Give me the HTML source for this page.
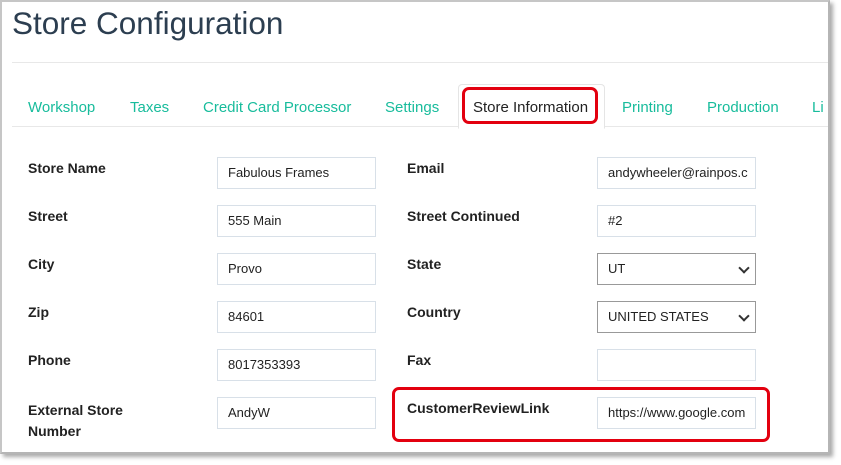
<!DOCTYPE html>
<html><head><style>
body{margin:0;width:841px;height:465px;background:#fff;position:relative;overflow:hidden;font-family:"Liberation Sans",sans-serif}
.page{position:absolute;left:0;top:0;width:826px;height:450px;background:#fff;border-top:2px solid #c6c6c6;border-left:2px solid #c6c6c6;box-shadow:3px 3px 4px #aaa;border-right:2px solid #b5b5b5;border-bottom:2px solid #b5b5b5}
h1{position:absolute;left:10px;top:3px;margin:0;font-size:31.5px;font-weight:normal;color:#2c3e50}
.hr{position:absolute;left:10px;right:0;height:1px;background:#e8e8e8}
.tab{position:absolute;top:97px;font-size:15px;color:#18bc9c}
.active{position:absolute;left:456px;top:82px;width:145px;height:43px;border:1px solid #e5e5e5;border-bottom:1px solid #fff;background:#fff;border-radius:4px 4px 0 0}
.red{position:absolute;border:3px solid #e3000f;border-radius:7px}
.lbl{position:absolute;font-size:14px;font-weight:bold;color:#222}
.in{position:absolute;border:1px solid #d8e0e8;font-size:13px;color:#222;line-height:30px;padding-left:10px;box-sizing:border-box;width:159px;height:32px;white-space:nowrap;overflow:hidden}
.sel::after{content:"";position:absolute;right:7px;top:10px;width:6px;height:6px;border-right:2px solid #333;border-bottom:2px solid #333;transform:rotate(45deg)}
</style></head><body>
<div class="page">
<h1>Store Configuration</h1>
<div class="hr" style="top:60px"></div>
<div class="hr" style="top:124px"></div>
<div class="active"></div>
<div class="tab" style="left:26px">Workshop</div>
<div class="tab" style="left:128px">Taxes</div>
<div class="tab" style="left:201px">Credit Card Processor</div>
<div class="tab" style="left:383px">Settings</div>
<div class="tab" style="left:471px;color:#222">Store Information</div>
<div class="tab" style="left:620px">Printing</div>
<div class="tab" style="left:705px">Production</div>
<div class="tab" style="left:810px">Li</div>
<div class="red" style="left:460px;top:85px;width:130px;height:31px"></div>

<div class="lbl" style="left:26px;top:158px">Store Name</div>
<div class="in" style="left:215px;top:155px">Fabulous Frames</div>
<div class="lbl" style="left:405px;top:158px">Email</div>
<div class="in" style="left:595px;top:155px">andywheeler@rainpos.c</div>

<div class="lbl" style="left:26px;top:206px">Street</div>
<div class="in" style="left:215px;top:203px">555 Main</div>
<div class="lbl" style="left:405px;top:206px">Street Continued</div>
<div class="in" style="left:595px;top:203px">#2</div>

<div class="lbl" style="left:26px;top:254px">City</div>
<div class="in" style="left:215px;top:251px">Provo</div>
<div class="lbl" style="left:405px;top:254px">State</div>
<div class="in sel" style="left:595px;top:251px;border-color:#999">UT</div>

<div class="lbl" style="left:26px;top:302px">Zip</div>
<div class="in" style="left:215px;top:299px">84601</div>
<div class="lbl" style="left:405px;top:302px">Country</div>
<div class="in sel" style="left:595px;top:299px;border-color:#999">UNITED STATES</div>

<div class="lbl" style="left:26px;top:350px">Phone</div>
<div class="in" style="left:215px;top:347px">8017353393</div>
<div class="lbl" style="left:405px;top:350px">Fax</div>
<div class="in" style="left:595px;top:347px"></div>

<div class="lbl" style="left:26px;top:398px;line-height:21px">External Store<br>Number</div>
<div class="in" style="left:215px;top:395px">AndyW</div>
<div class="lbl" style="left:405px;top:398px">CustomerReviewLink</div>
<div class="in" style="left:595px;top:395px">https://www.google.com</div>
<div class="red" style="left:390px;top:385px;width:372px;height:49px"></div>
</div>
</body></html>
